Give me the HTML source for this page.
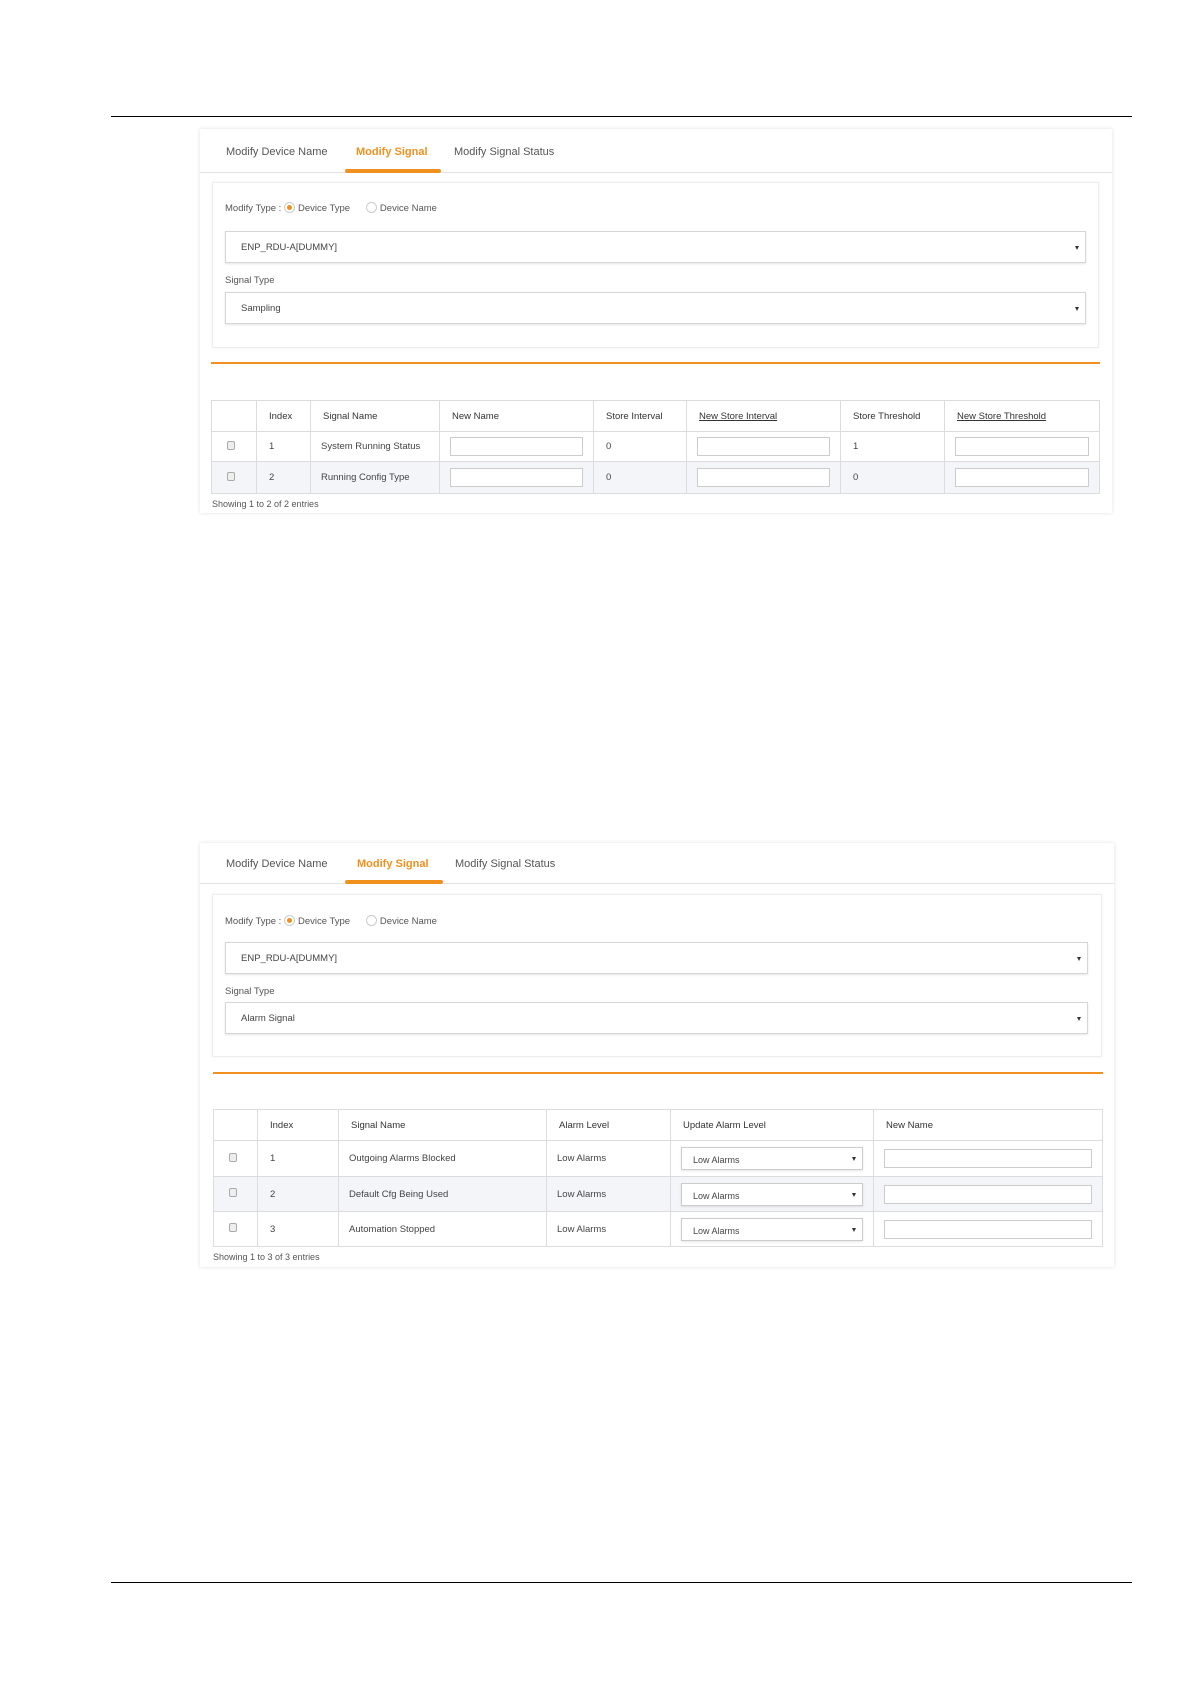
<!DOCTYPE html>
<html><head><meta charset="utf-8"><style>
*{box-sizing:border-box;margin:0;padding:0}
body{width:1190px;height:1684px;background:#fff;position:relative;font-family:"Liberation Sans",sans-serif;color:#444;overflow:hidden}
.abs{position:absolute}
.hr{position:absolute;left:111px;width:1021px;height:1px;background:#000}
.panel{position:absolute;left:200px;width:912px;background:#fff;box-shadow:0 0 4px rgba(0,0,0,.12)}
.tab{position:absolute;font-size:11px;color:#555;white-space:nowrap}
.tab.on{color:#f0901e;font-weight:bold}
.tabline{position:absolute;left:0;right:0;height:1px;background:#e2e2e2}
.ul{position:absolute;height:4px;background:#f0901e;border-radius:2px}
.box{position:absolute;border:1px solid #eee;box-shadow:0 0 3px rgba(0,0,0,.06)}
.lbl{position:absolute;font-size:9.5px;color:#555;white-space:nowrap}
.sel{position:absolute;border:1px solid #d6d6d6;box-shadow:0 1px 2px rgba(0,0,0,.1);font-size:9.5px;color:#444;padding-left:15px;display:flex;align-items:center}
.sel:after{content:"";position:absolute;right:6px;top:50%;margin-top:-1px;border-left:2px solid transparent;border-right:2px solid transparent;border-top:4px solid #333}
.radio{display:inline-block;width:11px;height:11px;border-radius:50%;border:1px solid #ccc;vertical-align:-2px;margin-right:3px;position:relative}
.radio.on:after{content:"";position:absolute;left:2px;top:2px;width:5px;height:5px;border-radius:50%;background:#f0901e}
.orange{position:absolute;height:2px;background:#f0901e}
table{position:absolute;border-collapse:collapse;font-size:9.5px;color:#444}
td,th{border:1px solid #dcdcdc;padding:0 0 0 12px;text-align:left;font-weight:normal;white-space:nowrap}
th{color:#333}
th u{color:#333}
tr.alt td{background:#f3f5f8}
.inp{display:block;height:19px;border:1px solid #ccc;background:#fff}
.cb{display:inline-block;width:8px;height:9px;border:1px solid #aaa;border-radius:2px;background:#eee}
.ds{position:relative;display:block;height:23px;border:1px solid #ccc;box-shadow:0 1px 2px rgba(0,0,0,.1);background:#fff;padding:7px 0 0 11px;font-size:9px}
.ds:after{content:"";position:absolute;right:6px;top:9px;border-left:2px solid transparent;border-right:2px solid transparent;border-top:4px solid #333}
.show{position:absolute;font-size:9px;color:#555}
</style></head><body>
<div class="hr" style="top:116px"></div>
<div class="hr" style="top:1582px"></div>

<!-- Panel 1 -->
<div class="panel" style="top:129px;height:384px">
  <div class="tab" style="left:26px;top:17px">Modify Device Name</div>
  <div class="tab on" style="left:156px;top:17px">Modify Signal</div>
  <div class="tab" style="left:254px;top:17px">Modify Signal Status</div>
  <div class="tabline" style="top:43px"></div>
  <div class="ul" style="left:145px;width:96px;top:40px"></div>
  <div class="box" style="left:12px;top:53px;width:887px;height:166px"></div>
  <div class="lbl" style="left:25px;top:73px">Modify Type : <span class="radio on"></span>Device Type &nbsp;&nbsp;&nbsp;&nbsp;&nbsp;<span class="radio"></span>Device Name</div>
  <div class="sel" style="left:25px;top:102px;width:861px;height:32px">ENP_RDU-A[DUMMY]</div>
  <div class="lbl" style="left:25px;top:146px">Signal Type</div>
  <div class="sel" style="left:25px;top:163px;width:861px;height:32px">Sampling</div>
  <div class="orange" style="left:11px;width:889px;top:233px"></div>
  <table style="left:11px;top:271px;width:889px">
    <tr style="height:31px"><th style="width:45px"></th><th style="width:54px">Index</th><th style="width:129px">Signal Name</th><th style="width:154px">New Name</th><th style="width:93px">Store Interval</th><th style="width:154px"><u>New Store Interval</u></th><th style="width:104px">Store Threshold</th><th><u>New Store Threshold</u></th></tr>
    <tr style="height:30px"><td style="padding-left:15px"><span class="cb"></span></td><td>1</td><td style="padding-left:10px">System Running Status</td><td style="padding:0 10px"><span class="inp"></span></td><td>0</td><td style="padding:0 10px"><span class="inp"></span></td><td>1</td><td style="padding:0 10px"><span class="inp"></span></td></tr>
    <tr class="alt" style="height:32px"><td style="padding-left:15px"><span class="cb"></span></td><td>2</td><td style="padding-left:10px">Running Config Type</td><td style="padding:0 10px"><span class="inp"></span></td><td>0</td><td style="padding:0 10px"><span class="inp"></span></td><td>0</td><td style="padding:0 10px"><span class="inp"></span></td></tr>
  </table>
  <div class="show" style="left:12px;top:370px">Showing 1 to 2 of 2 entries</div>
</div>

<!-- Panel 2 -->
<div class="panel" style="top:843px;height:424px;width:914px">
  <div class="tab" style="left:26px;top:15px">Modify Device Name</div>
  <div class="tab on" style="left:157px;top:15px">Modify Signal</div>
  <div class="tab" style="left:255px;top:15px">Modify Signal Status</div>
  <div class="tabline" style="top:40px"></div>
  <div class="ul" style="left:145px;width:98px;top:37px"></div>
  <div class="box" style="left:12px;top:51px;width:890px;height:163px"></div>
  <div class="lbl" style="left:25px;top:72px">Modify Type : <span class="radio on"></span>Device Type &nbsp;&nbsp;&nbsp;&nbsp;&nbsp;<span class="radio"></span>Device Name</div>
  <div class="sel" style="left:25px;top:99px;width:863px;height:32px">ENP_RDU-A[DUMMY]</div>
  <div class="lbl" style="left:25px;top:143px">Signal Type</div>
  <div class="sel" style="left:25px;top:159px;width:863px;height:32px">Alarm Signal</div>
  <div class="orange" style="left:13px;width:890px;top:229px"></div>
  <table style="left:13px;top:266px;width:890px">
    <tr style="height:31px"><th style="width:44px"></th><th style="width:81px">Index</th><th style="width:208px">Signal Name</th><th style="width:124px">Alarm Level</th><th style="width:203px">Update Alarm Level</th><th>New Name</th></tr>
    <tr style="height:36px"><td style="padding-left:15px"><span class="cb"></span></td><td>1</td><td style="padding-left:10px">Outgoing Alarms Blocked</td><td style="padding-left:10px">Low Alarms</td><td style="padding:0 10px"><span class="ds">Low Alarms</span></td><td style="padding:0 10px"><span class="inp"></span></td></tr>
    <tr class="alt" style="height:35px"><td style="padding-left:15px"><span class="cb"></span></td><td>2</td><td style="padding-left:10px">Default Cfg Being Used</td><td style="padding-left:10px">Low Alarms</td><td style="padding:0 10px"><span class="ds">Low Alarms</span></td><td style="padding:0 10px"><span class="inp"></span></td></tr>
    <tr style="height:35px"><td style="padding-left:15px"><span class="cb"></span></td><td>3</td><td style="padding-left:10px">Automation Stopped</td><td style="padding-left:10px">Low Alarms</td><td style="padding:0 10px"><span class="ds">Low Alarms</span></td><td style="padding:0 10px"><span class="inp"></span></td></tr>
  </table>
  <div class="show" style="left:13px;top:409px">Showing 1 to 3 of 3 entries</div>
</div>
</body></html>
